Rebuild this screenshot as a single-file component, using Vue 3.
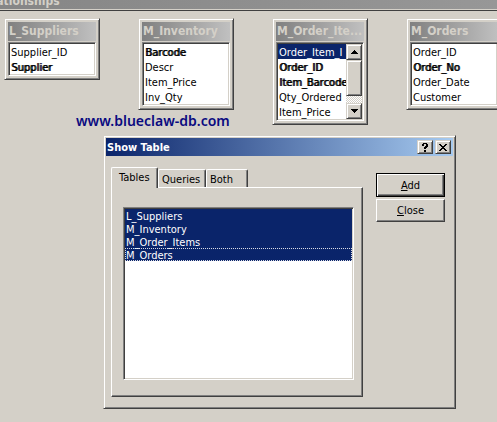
<script setup>
import { ref } from 'vue'

const windows = [
  { title: 'L_Suppliers', fields: [{ name: 'Supplier_ID' }, { name: 'Supplier', bold: true }] },
  {
    title: 'M_Inventory',
    fields: [{ name: 'Barcode', bold: true }, { name: 'Descr' }, { name: 'Item_Price' }, { name: 'Inv_Qty' }],
  },
  {
    title: 'M_Order_Ite...',
    scroll: true,
    fields: [
      { name: 'Order_Item_I', selected: true },
      { name: 'Order_ID', bold: true },
      { name: 'Item_Barcode', bold: true },
      { name: 'Qty_Ordered' },
      { name: 'Item_Price' },
    ],
  },
  {
    title: 'M_Orders',
    fields: [{ name: 'Order_ID' }, { name: 'Order_No', bold: true }, { name: 'Order_Date' }, { name: 'Customer' }],
  },
]

const tabs = ['Tables', 'Queries', 'Both']
const activeTab = ref('Tables')
const tables = ['L_Suppliers', 'M_Inventory', 'M_Order_Items', 'M_Orders']
const focused = ref('M_Orders')
</script>

<template>
  <main class="workspace">
    <header class="app-title"><h1>Relationships</h1></header>

    <div class="canvas">
      <section v-for="w in windows" :key="w.title" class="table-window">
        <h2 class="table-title">{{ w.title }}</h2>
        <div class="field-box">
          <ul class="fields">
            <li v-for="f in w.fields" :key="f.name" :class="{ bold: f.bold, selected: f.selected }">{{ f.name }}</li>
          </ul>
          <div v-if="w.scroll" class="scrollbar">
            <button type="button" class="scroll-btn" aria-label="Scroll up">
              <svg width="7" height="4" viewBox="0 0 7 4" shape-rendering="crispEdges"><path d="M3 0h1v1h1v1h1v1h1v1H0V3h1V2h1V1h1z" /></svg>
            </button>
            <div class="thumb"></div>
            <button type="button" class="scroll-btn" aria-label="Scroll down">
              <svg width="7" height="4" viewBox="0 0 7 4" shape-rendering="crispEdges"><path d="M0 0h7v1H6v1H5v1H4v1H3V3H2V2H1V1H0z" /></svg>
            </button>
          </div>
        </div>
      </section>
    </div>

    <p class="site">www.blueclaw-db.com</p>

    <section class="dialog" role="dialog" aria-labelledby="dialog-title">
      <header class="dialog-bar">
        <h2 id="dialog-title">Show Table</h2>
        <button type="button" class="caption-btn" aria-label="Help">
          <svg width="6" height="9" viewBox="0 0 6 9" shape-rendering="crispEdges"><path d="M1 0h4v1h1v3H5v1H4v1H2V4h1V3h1V1H2v2H0V1h1zM2 7h2v2H2z" /></svg>
        </button>
        <button type="button" class="caption-btn" aria-label="Close window">
          <svg width="8" height="7" viewBox="0 0 8 7" shape-rendering="crispEdges"><path d="M0 0h2v1h1v1h2V1h1V0h2v1H7v1H6v1H5v1h1v1h1v1h1v1H6V6H5V5H3v1H2v1H0V6h1V5h1V4h1V3H2V2H1V1H0z" /></svg>
        </button>
      </header>

      <div class="dialog-body">
        <div class="tab-area">
          <div class="tabs" role="tablist">
            <button
              v-for="t in tabs"
              :key="t"
              type="button"
              role="tab"
              class="tab"
              :class="{ active: t === activeTab }"
              :aria-selected="t === activeTab"
              @click="activeTab = t"
            >{{ t }}</button>
          </div>
          <div class="panel" role="tabpanel">
            <ul class="listbox" role="listbox" aria-label="Tables" aria-multiselectable="true">
              <li
                v-for="t in tables"
                :key="t"
                role="option"
                aria-selected="true"
                :class="{ focused: t === focused }"
                @click="focused = t"
              >{{ t }}</li>
            </ul>
          </div>
        </div>
        <div class="actions">
          <button type="button" class="btn default"><span><u>A</u>dd</span></button>
          <button type="button" class="btn"><span><u>C</u>lose</span></button>
        </div>
      </div>
    </section>
  </main>
</template>

<style>
body {
  margin: 0;
  background: #d4d0c8;
}
</style>

<style scoped>
.workspace {
  position: relative;
  min-height: 100vh;
  overflow: hidden;
  background: #d4d0c8;
  color: #000;
  font: 11px/15px Tahoma, "DejaVu Sans Condensed", "DejaVu Sans", sans-serif;
}
h1, h2, ul, p {
  margin: 0;
  padding: 0;
  font-size: 11px;
}
ul {
  list-style: none;
}
button {
  margin: 0;
  padding: 0;
  font: inherit;
  color: inherit;
  background: #d4d0c8;
  border-radius: 0;
}
.app-title {
  display: flex;
  align-items: flex-end;
  height: 9px;
  background: linear-gradient(90deg, #868686, #979797);
  border-bottom: 1px solid #d4d0c8;
  box-shadow: 0 1px #404040;
  color: #d4d0c8;
}
.app-title h1 {
  margin-left: -23px;
  font-size: 12px;
  line-height: 16px;
}
.canvas {
  display: flex;
  align-items: flex-start;
  gap: 38px;
  padding: 8px 0 0 4px;
}
.table-window {
  flex: none;
  width: 96px;
  box-sizing: border-box;
  padding: 2px;
  border: 1px solid;
  border-color: #d4d0c8 #404040 #404040 #d4d0c8;
  box-shadow: inset 1px 1px #fff, inset -1px -1px #808080;
}
.table-title {
  height: 19px;
  margin: 1px 1px 0;
  padding: 0 1px;
  font-size: 12px;
  line-height: 19px;
  color: #d4d0c8;
  background: linear-gradient(90deg, #808080, #c0c0c0);
  white-space: nowrap;
}
.field-box {
  display: flex;
  margin: 1px;
  border: 1px solid;
  border-color: #808080 #fff #fff #808080;
  box-shadow: inset 1px 1px #404040, inset -1px -1px #d4d0c8;
  padding: 1px;
  background: #fff;
}
.fields {
  flex: 1;
  min-width: 0;
}
.fields li {
  height: 15px;
  padding-left: 1px;
  line-height: 17px;
  white-space: nowrap;
}
.bold {
  text-shadow: 1px 0 #000;
}
.selected {
  background: #0a246a;
  color: #fff;
}
.scrollbar {
  position: relative;
  display: flex;
  flex-direction: column;
  justify-content: space-between;
  width: 16px;
  background: repeating-conic-gradient(#fff 0 25%, #d4d0c8 0 50%) 0 0 / 2px 2px;
}
.scroll-btn,
.thumb,
.caption-btn {
  border: 1px solid;
  border-color: #d4d0c8 #404040 #404040 #d4d0c8;
  box-shadow: inset 1px 1px #fff, inset -1px -1px #808080;
  background: #d4d0c8;
}
.scroll-btn,
.caption-btn {
  display: flex;
  align-items: center;
  justify-content: center;
}
.scroll-btn {
  height: 16px;
}
.thumb {
  flex: 1;
  margin-bottom: 7px;
}
.site {
  position: absolute;
  left: 76px;
  top: 111px;
  font: 600 14px/20px "Noto Sans", "Open Sans", sans-serif;
  color: #0a0a80;
}
.dialog {
  position: absolute;
  left: 103px;
  top: 135px;
  width: 353px;
  box-sizing: border-box;
  padding: 2px;
  background: #d4d0c8;
  border: 1px solid;
  border-color: #d4d0c8 #404040 #404040 #d4d0c8;
  box-shadow: inset 1px 1px #fff, inset -1px -1px #808080;
}
.dialog-bar {
  display: flex;
  align-items: center;
  gap: 2px;
  height: 18px;
  padding: 0 2px 0 1px;
  background: linear-gradient(90deg, #0a246a, #a6caf0);
  color: #fff;
}
.dialog-bar h2 {
  flex: 1;
}
.caption-btn {
  width: 16px;
  height: 14px;
}
.dialog-body {
  display: flex;
  align-items: flex-start;
  gap: 13px;
  padding: 11px 8px 9px 5px;
}
.tab-area {
  flex: 1;
}
.tabs {
  display: flex;
  align-items: flex-end;
  height: 20px;
}
.tab {
  height: 18px;
  padding: 2px 4px 0 3px;
  border: 1px solid;
  border-color: #fff #404040 transparent #fff;
  border-bottom: 0;
  border-radius: 2px 2px 0 0;
  box-shadow: inset -1px 0 #808080;
  width: 42px;
  text-align: left;
}
.tab:nth-child(2) {
  width: 48px;
}
.tab.active {
  position: relative;
  width: 47px;
  height: 21px;
  margin-bottom: -1px;
  padding: 0 7px 1px;
}
.panel {
  padding: 19px 8px 16px 11px;
  border: 1px solid;
  border-color: #fff #404040 #404040 #fff;
  box-shadow: inset -1px -1px #808080;
}
.listbox {
  min-height: 169px;
  padding: 1px;
  background: #fff;
  border: 1px solid;
  border-color: #808080 #fff #fff #808080;
  box-shadow: inset 1px 1px #404040, inset -1px -1px #d4d0c8;
}
.listbox li {
  height: 13px;
  box-sizing: border-box;
  border: 1px solid #0a246a;
  line-height: 13px;
  background: #0a246a;
  color: #fff;
}
.listbox li.focused {
  border: 1px dotted #d8dbe6;
}
.actions {
  display: flex;
  flex-direction: column;
  gap: 2px;
  width: 69px;
  padding-top: 6px;
}
.btn {
  height: 23px;
  border: 1px solid;
  border-color: #fff #404040 #404040 #fff;
  box-shadow: inset -1px -1px #808080;
}
.btn.default {
  height: 24px;
  border-color: #000;
  box-shadow: inset 1px 1px #fff, inset -1px -1px #404040, inset -2px -2px #808080;
}
</style>
